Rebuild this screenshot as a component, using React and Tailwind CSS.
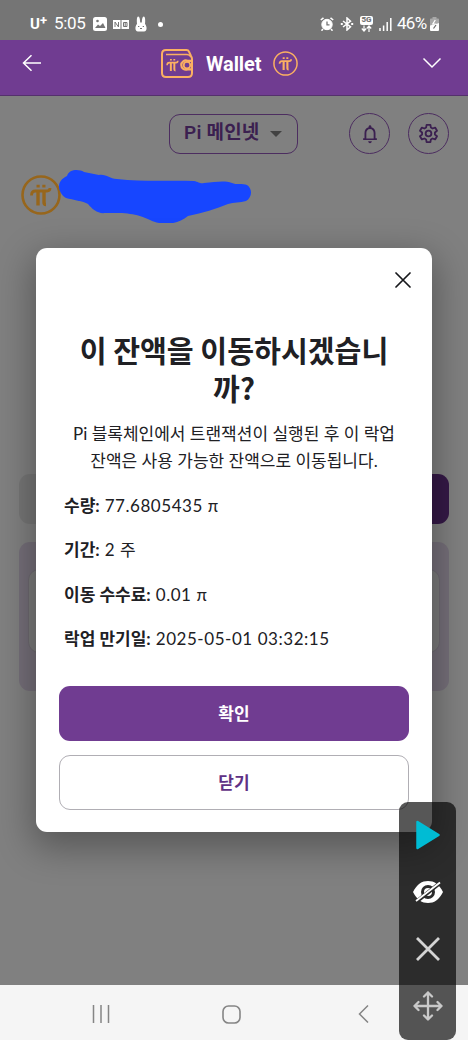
import React from 'react';

const DETALLES = [
  { label: '수량:', value: '77.6805435 π' },
  { label: '기간:', value: '2 주' },
  { label: '이동 수수료:', value: '0.01 π' },
  { label: '락업 만기일:', value: '2025-05-01 03:32:15' },
];

const PiMark = () => (
  <g fill="none" stroke="currentColor">
    <path d="M10.500 20.500c0-3 1.300-4.500 4-4.500h11.500c2 0 3-.8 3-3" strokeWidth="2.800" />
    <path d="M17 16v14.500M23 16v11.500c0 1.500.6 2 2 2" strokeWidth="3.400" />
    <path d="M15.500 11.200h3.200M21.300 11.200h3.200" strokeWidth="2.800" />
  </g>
);

const PiCoin = ({ className, ring }) => (
  <svg viewBox="0 0 40 40" className={className}>
    <circle cx="20" cy="20" r="18.500" fill="none" stroke="currentColor" strokeWidth={ring} />
    <PiMark />
  </svg>
);

const WalletIcon = () => (
  <svg viewBox="0 0 34 30" className="h-[30px] w-[34px] text-[#fbb062]" fill="none" stroke="currentColor" strokeWidth="2">
    <path d="M6 2h20.500q1.800 0 2.600 1.800L31 8q1 1.500 1 3v14q0 4-4 4H6q-4 0-4-4V6q0-4 4-4z" />
    <path d="M6 6.500h21q2.500 0 4 2.500" strokeWidth="1.500" />
    <path d="M32 12.800h-4.500a4.600 4.600 0 1 0 0 8.600H32" strokeWidth="2.200" />
    <circle cx="27" cy="17.200" r="3.300" strokeWidth="1.800" />
    <g transform="translate(1 5.300) scale(.58)">
      <PiMark />
    </g>
  </svg>
);

const StatusBar = () => (
  <div className="flex h-10 items-center bg-[#757575] pt-2 pr-[29px] pl-[30px] font-['Roboto',sans-serif] text-white">
    <span className="flex h-5 w-5 items-center text-[15px] font-bold">
      U<sup className="-top-1 text-[13px] leading-none">+</sup>
    </span>
    <span className="ml-1 w-8 text-[17px] tracking-[-0.3px] whitespace-nowrap">5:05</span>
    <svg viewBox="0 0 14 14" className="ml-[7px] size-[14px]">
      <rect width="14" height="14" rx="2.500" fill="#fff" />
      <path d="m2 11 3-3.500 2 1.500 3-3 2.500 5z" fill="#757575" />
      <circle cx="4.500" cy="4" r="1.300" fill="#757575" />
    </svg>
    <svg viewBox="0 0 16 9" className="ml-[6px] h-[9px] w-4">
      <path d="M0 0h7.500v9H0zM8.500 0H16v9H8.500z" fill="#fff" />
      <path d="M2 7V2l3.500 5V2M10.500 2.500h3.500v4h-3.500zM12.200 2.500v4" fill="none" stroke="#757575" />
    </svg>
    <svg viewBox="0 0 12 16" className="ml-[6px] h-4 w-3">
      <path d="M2 8C1.500 3 2 .5 3.300.5S5 3 5.200 6.500h1.600C7 3 7.400.5 8.700.5S10.500 3 10 8c2 2 2.500 7.500-1 7.500H3C-.5 15.500 0 10 2 8z" fill="#fff" />
      <path d="M3 10.500h1.300M7.700 10.500H9M5 12.500h2" stroke="#757575" />
    </svg>
    <span className="ml-[11px] size-[5px] rounded-full bg-white" />

    <div className="ml-auto flex items-center">
      <svg viewBox="0 0 14 14" className="size-[14px]" fill="none" stroke="#fff">
        <circle cx="7" cy="7.500" r="5.200" fill="#fff" />
        <path d="m.8 3 2.700-2.200M13.200 3 10.500.8M3 12l-1.500 1.700M11 12l1.500 1.700" strokeWidth="1.600" />
        <path d="M7 4.500v3.300h2.500" stroke="#757575" strokeWidth="1.300" />
      </svg>
      <svg viewBox="0 0 14 14" className="ml-[6px] size-[14px]" fill="none" stroke="#fff" strokeWidth="1.500">
        <path d="m3 4 7.500 5.800L7 13V1l3.500 3.200L3 10" />
        <path d="M.8 7h2M11.200 7h2" strokeWidth="1.800" />
      </svg>
      <div className="ml-[6px] flex h-[17px] w-[13px] flex-col items-center">
        <span className="flex h-[9px] w-[13px] shrink-0 items-center justify-center rounded-xs bg-white text-[8px] leading-none font-black text-[#757575]">5G</span>
        <svg viewBox="0 0 11 7" className="h-[7px] w-[11px]" fill="none" stroke="#fff" strokeWidth="1.200">
          <path d="M3 .5v5M.8 3.500 3 6l2.200-2.500M8 7V1.500M5.800 3.500 8 1l2.200 2.500" />
        </svg>
      </div>
      <svg viewBox="0 0 13 13" className="ml-[6px] size-[13px]" stroke="#fff" strokeWidth="1.500">
        <path d="M1 10v3M4.600 7.500V13M8.200 4v9M11.800 0v13" />
      </svg>
      <span className="ml-[5px] w-[33px] text-[17px] tracking-[-0.7px] whitespace-nowrap">46%</span>
      <svg viewBox="0 0 9 14" className="h-[14px] w-[9px]">
        <path d="M2.500 0h4v1.500H8q1 0 1 1V6L0 9V2.500q0-1 1-1h1.500z" fill="#a8a8a8" />
        <path d="M0 8.500 9 6v7q0 1-1 1H1q-1 0-1-1z" fill="#fff" />
        <path d="M5.300 3 2.800 7h3" fill="none" stroke="#fff" strokeWidth="1.200" />
        <path d="M6 8 3.500 11.500" stroke="#666" strokeWidth="1.200" />
      </svg>
    </div>
  </div>
);

const Header = () => (
  <header className="flex h-[56px] items-start border-b border-[#54316c] bg-[#703c91] pt-2 pr-[26px] pl-[22px] text-white">
    <svg viewBox="0 0 20 18" className="mt-[6px] h-[18px] w-5" fill="none" stroke="#fff" strokeWidth="1.500">
      <path d="M19 9H2M9.500 1.300 1.500 9l8 7.700" />
    </svg>
    <div className="ml-[118px] flex h-[30px] items-center">
      <WalletIcon />
      <span className="ml-3 w-[57px] pt-px font-['Roboto',sans-serif] text-[20px] font-bold tracking-[-0.1px]">Wallet</span>
      <PiCoin ring="2.400" className="ml-[10px] size-[25px] text-[#fbb062]" />
    </div>
    <svg viewBox="0 0 20 12" className="mt-[9px] ml-auto h-3 w-5" fill="none" stroke="#fff" strokeWidth="1.500">
      <path d="m1.500 1.500 8.500 8.500 8.500-8.500" />
    </svg>
  </header>
);

// Página atenuada detrás del diálogo
const WalletPage = () => (
  <div className="flex h-full flex-col bg-[#808080]">
    <div className="flex items-center pt-[17px] pl-[169px]">
      <div className="flex h-10 w-[129px] items-center rounded-[11px] border border-[#4c2d60] pl-[14px] text-[#3b2050]">
        <span className="w-[78px] font-['Roboto','Noto_Sans_CJK_KR',sans-serif] text-[19px] font-semibold tracking-[0.2px] whitespace-nowrap">Pi 메인넷</span>
        <span className="ml-[8px] border-x-[6px] border-t-[6px] border-x-transparent border-t-[#424242]" />
      </div>
      <div className="ml-[51px] flex size-[41px] items-center justify-center rounded-full border border-[#4c2d60]">
        <svg viewBox="0 0 24 24" className="size-[22px] text-[#3b2050]" fill="currentColor">
          <path d="M12 22c1.100 0 2-.9 2-2h-4c0 1.100.9 2 2 2zm6-6v-5c0-3.070-1.630-5.640-4.500-6.320V4c0-.83-.67-1.500-1.500-1.500s-1.500.67-1.500 1.500v.68C7.640 5.360 6 7.920 6 11v5.500H4.500v2h15v-2H18zM16 17H8v-6c0-2.480 1.510-4.500 4-4.500s4 2.020 4 4.500v6z" />
        </svg>
      </div>
      <div className="ml-[18px] flex size-[41px] items-center justify-center rounded-full border border-[#4c2d60]">
        <svg viewBox="0 0 24 24" className="size-[23px] text-[#3b2050]" fill="none" stroke="currentColor" strokeWidth="1.900" strokeLinejoin="round">
          <path d="m10 3-.5 2.800-1.700 1-2.700-1-2 3.400 2.200 1.800v2l-2.200 1.800 2 3.400 2.700-1 1.700 1L10 21h4l.5-2.800 1.700-1 2.700 1 2-3.400-2.200-1.800v-2l2.200-1.800-2-3.400-2.700 1-1.700-1L14 3z" />
          <circle cx="12" cy="12" r="3" />
        </svg>
      </div>
    </div>

    <div className="flex items-start pt-[15px] pl-[21px]">
      <PiCoin ring="2.600" className="mt-[6px] size-[40px] text-[#97661c]" />
      <svg viewBox="0 0 194 54" className="-ml-[3px] h-[54px] w-[194px]">
        <path d="M19 28h14v4H21z" fill="#333" />
        <path
          d="M9 7C11 0 21 0 26 3l15 3c8-1 10 4 18 4 28 3 54 1 77 2 5 1 6 3 10 2 12-1 20-3 28 0 4 2 11 0 15 2 6 4 5 13-1 16-6 2-12 1-18 3-12 5-25 9-40 12-12 10-28 9-38 4-15-7-23-7-45-7-7 1-13-4-17-9-5-3-15-4-22-6C-1 23-2 12 9 7z"
          fill="#1746ff"
        />
      </svg>
    </div>

    <div className="mx-[19px] mt-[251px] flex h-[50px] shrink-0">
      <div className="flex-1 rounded-[11px] bg-[#767676]" />
      <div className="ml-3 flex-1 rounded-[11px] bg-[#351947]" />
    </div>
    <div className="mx-[19px] mt-[18px] h-[149px] shrink-0 rounded-[11px] bg-[#756f79] px-[9px] pt-[27px]">
      <div className="h-[84px] rounded-[11px] border border-[#6e6a71] bg-[#7b7b7b]" />
    </div>
  </div>
);

const Modal = () => (
  <div className="flex h-[584px] w-[396px] flex-col rounded-[11px] bg-white px-[23px] pt-[24px] font-['Lato','Noto_Sans_CJK_KR',sans-serif] text-[#202024] shadow-[0_12px_36px_4px_rgba(0,0,0,0.32)]">
    <svg viewBox="0 0 16 16" className="mr-[-2px] size-4 self-end" fill="none" stroke="#17181c" strokeWidth="1.700" strokeLinecap="round">
      <path d="m1 1 14 14M15 1 1 15" />
    </svg>
    <h2 className="mt-[42px] text-center font-['Noto_Sans_CJK_KR',sans-serif] text-[29.200px] leading-[38px] font-bold whitespace-nowrap">
      이 잔액을 이동하시겠습니<br />까?
    </h2>
    <p className="mt-[15px] text-center text-[17px] leading-[26.500px] whitespace-nowrap">
      Pi 블록체인에서 트랜잭션이 실행된 후 이 락업<br />잔액은 사용 가능한 잔액으로 이동됩니다.
    </p>
    <dl className="mt-[18px] flex flex-col gap-[17.400px] pl-[5px] text-[17px] leading-[27px]">
      {DETALLES.map((item) => (
        <div key={item.label} className="flex gap-[5px]">
          <dt className="font-bold">{item.label}</dt>
          <dd className="tracking-[0.55px] whitespace-nowrap">{item.value}</dd>
        </div>
      ))}
    </dl>
    <button className="mt-[34px] h-[55px] shrink-0 rounded-[11px] bg-[#703c91] text-[17px] font-bold text-white">확인</button>
    <button className="mt-[14px] h-[55px] shrink-0 rounded-[11px] border border-[#b0aeb4] text-[17px] font-bold text-[#5f3185]">닫기</button>
  </div>
);

const NavBar = () => (
  <nav className="flex h-[55px] items-center bg-[#f5f5f5] pt-[3px] pl-[92px] text-[#858585]">
    <svg viewBox="0 0 18 18" className="size-[18px]" stroke="currentColor" strokeWidth="1.500">
      <path d="M1.500 0v18M9 0v18M16.500 0v18" />
    </svg>
    <svg viewBox="0 0 19 19" className="ml-[112px] size-[19px]" fill="none" stroke="currentColor" strokeWidth="1.600">
      <rect x="1" y="1" width="17" height="17" rx="5.500" />
    </svg>
    <svg viewBox="0 0 11 18" className="ml-[117px] h-[18px] w-[11px]" fill="none" stroke="currentColor" strokeWidth="1.500">
      <path d="M10 .5 1.500 9l8.500 8.500" />
    </svg>
  </nav>
);

const FloatingTools = () => (
  <div className="absolute top-[802px] left-[399px] flex h-[238px] w-[57px] flex-col items-center rounded-[9px] bg-black/66 pt-[18px]">
    <svg viewBox="0 0 24 30" className="h-[30px] w-6">
      <path d="M1.500 2v26L22.500 15z" fill="#00bcd4" stroke="#00bcd4" strokeWidth="2.500" strokeLinejoin="round" />
    </svg>
    <svg viewBox="0 0 30 24" className="mt-[30px] h-6 w-[30px]">
      <path d="M0 12C4 4 9 1 15 1s11 3 15 11c-4 8-9 11-15 11S4 20 0 12z" fill="#fff" />
      <circle cx="15" cy="12" r="5.500" fill="#fff" stroke="#2b2b2b" strokeWidth="3" />
      <path d="m3 22 24-19" stroke="#2b2b2b" strokeWidth="4" />
      <path d="m3 21 24-18.500" stroke="#fff" strokeWidth="1.800" />
    </svg>
    <svg viewBox="0 0 24 24" className="mt-[33px] size-6" stroke="#d4d4d4" strokeWidth="2.800">
      <path d="m1 1 22 22M23 1 1 23" />
    </svg>
    <svg viewBox="0 0 30 30" className="mt-[30px] size-[30px]" fill="none" stroke="#c9c9c9" strokeWidth="2.300" strokeLinecap="round" strokeLinejoin="round">
      <path d="M15 1.500v27M1.500 15h27M11 5.500l4-4 4 4M11 24.500l4 4 4-4M5.500 11l-4 4 4 4M24.500 11l4 4-4 4" />
    </svg>
  </div>
);

const App = () => (
  <div className="relative flex h-[1040px] w-[468px] flex-col overflow-hidden">
    <StatusBar />
    <Header />
    <main className="relative h-[889px] overflow-hidden">
      <WalletPage />
      <div className="absolute inset-0 flex items-start justify-center pt-[152px]">
        <Modal />
      </div>
    </main>
    <NavBar />
    <FloatingTools />
  </div>
);

export default App;
